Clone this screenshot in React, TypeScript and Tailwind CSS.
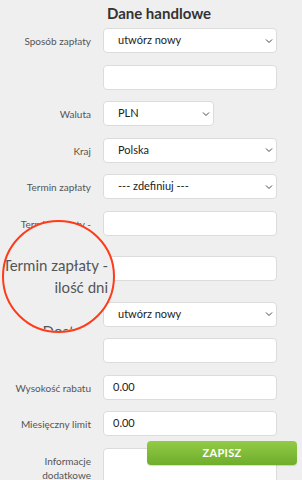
const font = { fontFamily: "Lato, 'Open Sans', sans-serif" };

function Chevron() {
  return (
    <svg
      className="pointer-events-none absolute right-[4px] top-1/2 -translate-y-1/2"
      width="8"
      height="5"
      viewBox="0 0 8 5"
      fill="none"
    >
      <path d="M1 1l3 3 3-3" stroke="#444" strokeWidth="1" />
    </svg>
  );
}

function Select({ value, w = "w-[174px]" }: { value: string; w?: string }) {
  return (
    <div className={`relative ${w} h-[25px]`}>
      <div className="h-full rounded-[4px] border border-[#dcdcdc] bg-white pl-[14px] flex items-center text-[11px] text-[#222]">
        {value}
      </div>
      <Chevron />
    </div>
  );
}

function Input({ value = "" }: { value?: string }) {
  return (
    <div className="w-[174px] h-[25px] rounded-[4px] border border-[#dcdcdc] bg-white pl-[9px] flex items-center text-[11px] text-[#222]">
      {value}
    </div>
  );
}

function Row({ label, children }: { label?: React.ReactNode; children: React.ReactNode }) {
  return (
    <div className="flex items-start gap-[12px]">
      <div className="w-[91px] shrink-0 text-right text-[10px] leading-[14px] pt-[6px] text-[#555]">
        {label}
      </div>
      {children}
    </div>
  );
}

export default function App() {
  return (
    <div className="relative w-full h-[480px] overflow-hidden bg-[#efefef]" style={font}>
      <h1 className="pl-[16px] pt-[3px] text-center text-[15px] leading-[20px] font-bold text-[#333]">
        Dane handlowe
      </h1>
      <div className="mt-[5px] flex flex-col gap-[11.5px]">
        <Row label="Sposób zapłaty">
          <Select value="utwórz nowy" />
        </Row>
        <Row>
          <Input />
        </Row>
        <Row label="Waluta">
          <Select value="PLN" w="w-[111px]" />
        </Row>
        <Row label="Kraj">
          <Select value="Polska" />
        </Row>
        <Row label="Termin zapłaty">
          <Select value="--- zdefiniuj ---" />
        </Row>
        <Row label={<>Termin zapłaty -<br />data</>}>
          <Input />
        </Row>
        <Row label={<>Termin zapłaty -<br />ilość dni</>}>
          <Input />
        </Row>
        <Row label="Dostawca">
          <Select value="utwórz nowy" />
        </Row>
        <Row>
          <Input />
        </Row>
        <Row label="Wysokość rabatu">
          <Input value="0.00" />
        </Row>
        <Row label="Miesięczny limit">
          <Input value="0.00" />
        </Row>
        <Row label={<>Informacje<br />dodatkowe</>}>
          <div className="w-[174px] h-[60px] rounded-[4px] border border-[#dcdcdc] bg-white" />
        </Row>
      </div>

      {/* magnifier lens */}
      <div className="absolute left-[2px] top-[220px] w-[113px] h-[113px] rounded-full border-2 border-[#ff3b1a] bg-[#efefef] overflow-hidden">
        <div className="absolute right-[5px] top-[32px] text-right text-[15px] leading-[22px] text-[#555] whitespace-nowrap">
          <div>Termin zapłaty -</div>
          <div>ilość dni</div>
          <div>&nbsp;</div>
          <div>Dostawca</div>
        </div>
      </div>

      <button className="absolute left-[147px] top-[441px] w-[150px] h-[24px] rounded-[4px] bg-gradient-to-b from-[#93cb45] to-[#6fad2c] text-white text-[11px] font-bold tracking-[0.3px] shadow-[0_1px_1px_rgba(0,0,0,0.15)]">
        ZAPISZ
      </button>
    </div>
  );
}
